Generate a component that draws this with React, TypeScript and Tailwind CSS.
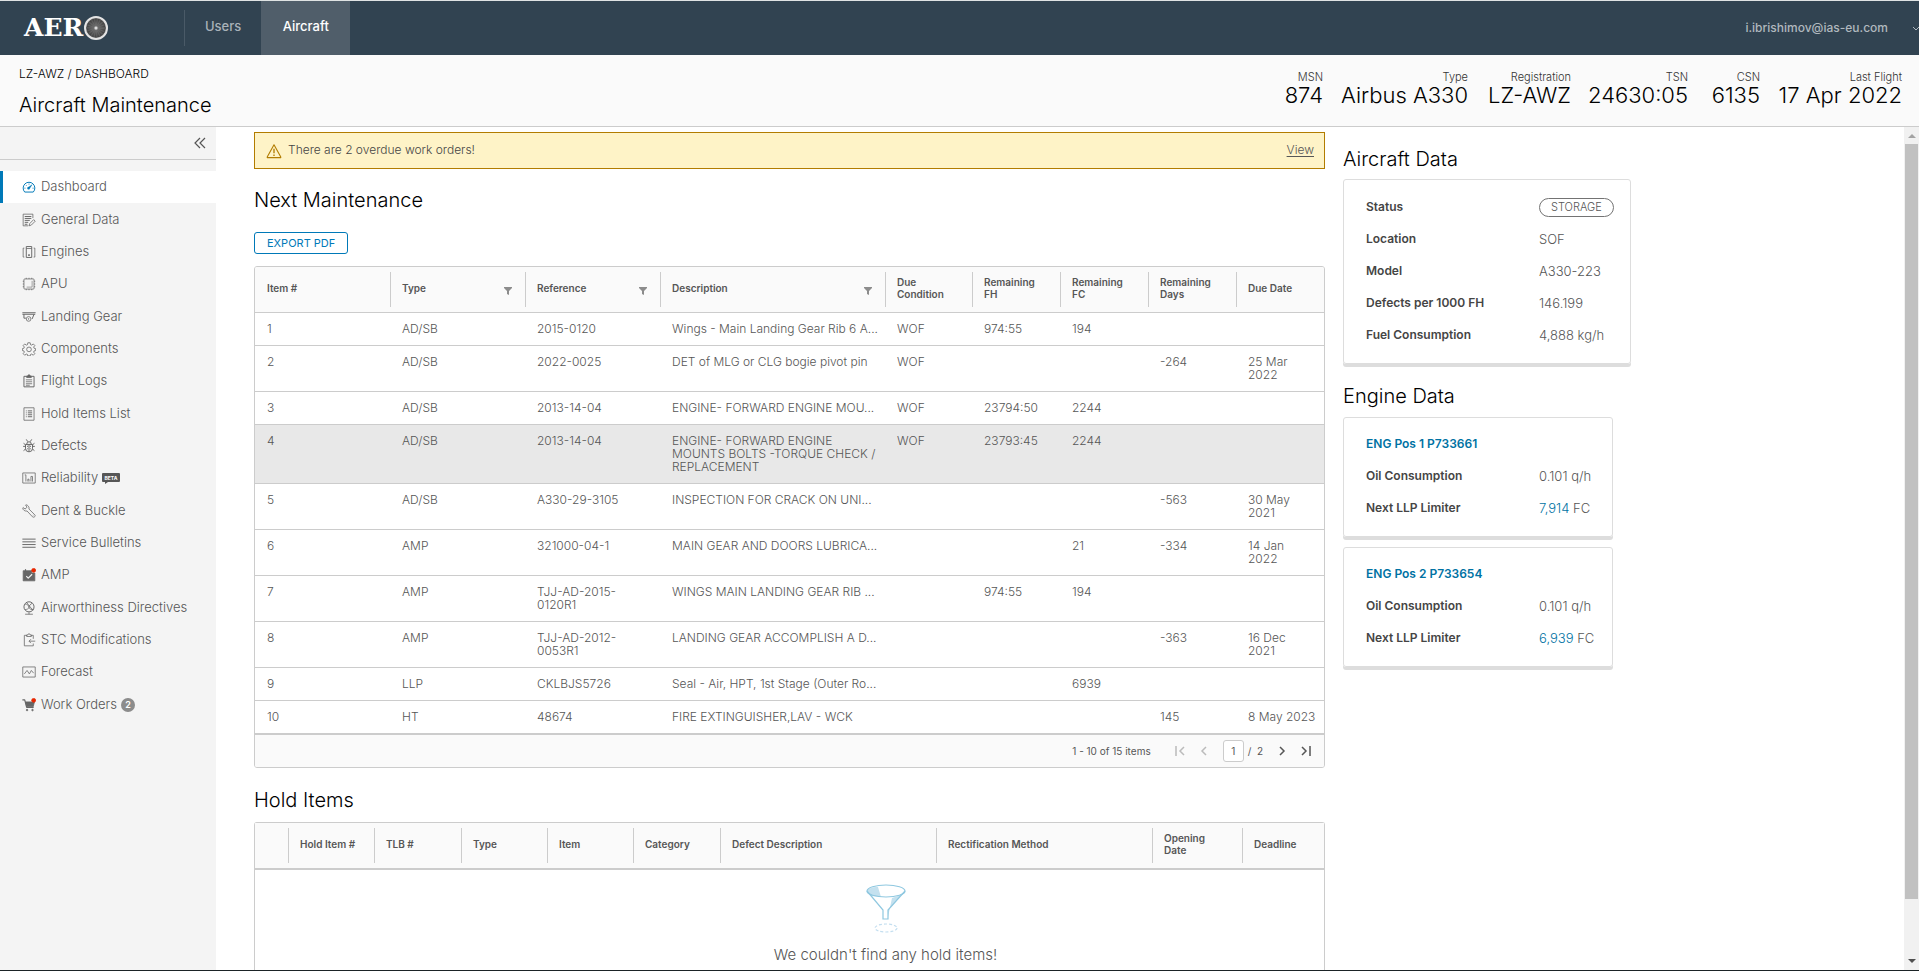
import type { ReactNode } from "react";

type NavItem = { label: string; icon: ReactNode; active?: boolean; beta?: boolean; count?: number };

function Icon({ children, className = "size-[14px]" }: { children: ReactNode; className?: string }) {
	return (
		<svg
			viewBox="0 0 36 36"
			className={`shrink-0 ${className}`}
			fill="none"
			stroke="currentColor"
			strokeWidth="2"
			strokeLinejoin="round"
			aria-hidden="true"
		>
			{children}
		</svg>
	);
}

const navItems: NavItem[] = [
	{
		label: "Dashboard",
		active: true,
		icon: (
			<>
				<path d="M7 31a15 15 0 1 1 22 0z" strokeWidth="2.5" />
				<path d="M6 21h3M27 21h3M18 9v3M10 13l2 2" />
				<path d="M26 12l-6 9a3 3 0 1 1-3-3z" fill="currentColor" strokeWidth="1" />
			</>
		),
	},
	{
		label: "General Data",
		icon: (
			<>
				<path d="M28 13V3H3v30h13" />
				<path d="M7 9h17M7 14h17M7 19h13M7 24h9M7 29h7" strokeWidth="2.5" />
				<path d="M20 27l10-10 4 4-10 10-6 2z" />
			</>
		),
	},
	{
		label: "Engines",
		icon: (
			<>
				<path d="M11 4h14v28H11z" strokeWidth="2.5" />
				<path d="M11 9h14M6 8H3v23h3M30 8h3v23h-3" />
				<path d="M16 26h4" strokeWidth="4" />
			</>
		),
	},
	{
		label: "APU",
		icon: (
			<>
				<rect x="5" y="5" width="26" height="26" rx="2" />
				<path d="M26 10v16H12" strokeWidth="1.5" />
				<path d="M11 2v3M18 2v3M25 2v3M11 31v3M18 31v3M25 31v3M2 11h3M2 18h3M2 25h3M31 11h3M31 18h3M31 25h3" />
			</>
		),
	},
	{
		label: "Landing Gear",
		icon: (
			<>
				<path d="M1 7h34M1 11h33M5 11v10h5M31 11l-5 12" strokeWidth="2.5" />
				<circle cx="17" cy="23" r="6" />
				<circle cx="17" cy="23" r="1" />
			</>
		),
	},
	{
		label: "Components",
		icon: (
			<>
				<path d="M15 2h6l1 5 3 1 4-3 4 4-3 4 1 3 4 1v5l-4 1-1 3 3 4-4 4-4-3-3 1-1 4h-6l-1-4-3-1-4 3-4-4 3-4-1-3-4-1v-5l4-1 1-3-3-4 4-4 4 3 3-1z" />
				<circle cx="18" cy="19" r="6" />
			</>
		),
	},
	{
		label: "Flight Logs",
		icon: (
			<>
				<path d="M12 6H5v27h26V6h-7" strokeWidth="2.5" />
				<path d="M12 9V5h3a3 3 0 0 1 6 0h3v4z" fill="currentColor" />
				<path d="M10 15h16M10 20h16M10 25h16M10 29h10" />
			</>
		),
	},
	{
		label: "Hold Items List",
		icon: (
			<>
				<rect x="5" y="2" width="26" height="32" />
				<path d="M10 10h2M10 15h2M10 20h2M10 25h2M15 10h11M15 15h11M15 20h11M15 25h11" strokeWidth="2.5" />
			</>
		),
	},
	{
		label: "Defects",
		icon: (
			<>
				<path d="M9 14h18v10a9 9 0 0 1-18 0z" strokeWidth="2.5" />
				<path d="M12 14a6 7 0 0 1 12 0M18 14v18M11 1l4 6M25 1l-4 6M9 19H3M27 19h6M10 25l-6 5M26 25l6 5M9 15l-5-4M27 15l5-4" strokeWidth="2.5" />
				<path d="M13 19h2M21 19h2M13 25h2M21 25h2" strokeWidth="3" />
			</>
		),
	},
	{
		label: "Reliability",
		beta: true,
		icon: (
			<>
				<rect x="2" y="5" width="32" height="26" />
				<path d="M7 10h3v17M15 27v-6h3v6M23 27V14h4v13" />
			</>
		),
	},
	{
		label: "Dent & Buckle",
		icon: (
			<>
				<path d="M33 28L18 13c1-5-2-10-8-11L9 3l4 5-5 5-5-4-1 1c0 6 6 9 11 8l14 15c4 3 9-2 6-5z" />
				<path d="M28 29h1" strokeWidth="2.5" />
			</>
		),
	},
	{ label: "Service Bulletins", icon: <path d="M1 8h34M1 15h34M1 22h34M1 29h34" strokeWidth="2.5" /> },
	{
		label: "AMP",
		icon: (
			<>
				<path d="M3 7h22v6h8v20H3z" fill="currentColor" />
				<path d="M9 3v7" strokeWidth="3" />
				<path d="M11 21l5 5 10-10" stroke="#f4f4f4" strokeWidth="3" />
				<circle cx="30" cy="6" r="5" fill="#e62700" stroke="#e62700" />
			</>
		),
	},
	{
		label: "Airworthiness Directives",
		icon: (
			<>
				<circle cx="18" cy="15" r="13" strokeWidth="2.5" />
				<path d="M8 8c6 0 9 3 10 8s6 7 12 5M26 6c-4 2-8 6-8 10s-6 6-10 6M12 4l16 20M8 34h20M18 29v5" />
			</>
		),
	},
	{
		label: "STC Modifications",
		icon: (
			<>
				<path d="M29 15V6h-6M13 6H6v27h23v-6" />
				<path d="M12 9V5h3a3 3 0 0 1 6 0h3v4zM34 21H18M23 16l-5 5 5 5" />
			</>
		),
	},
	{
		label: "Forecast",
		icon: (
			<>
				<rect x="2" y="5" width="32" height="26" />
				<path d="M6 23l7-9 6 9 5-9 6 7" />
			</>
		),
	},
	{
		label: "Work Orders",
		count: 2,
		icon: (
			<>
				<path d="M1 5h6l5 19h18" strokeWidth="3" />
				<path d="M9 10h23l-3 12H12z" fill="currentColor" />
				<circle cx="13" cy="31" r="2" fill="currentColor" />
				<circle cx="27" cy="31" r="2" fill="currentColor" />
				<circle cx="30" cy="6" r="5" fill="#e62700" stroke="#e62700" />
			</>
		),
	},
];

const stats = [
	{ label: "MSN", value: "874", width: "w-[60px]" },
	{ label: "Type", value: "Airbus A330", width: "w-[145px]" },
	{ label: "Registration", value: "LZ-AWZ", width: "w-[103px]" },
	{ label: "TSN", value: "24630:05", width: "w-[117px]" },
	{ label: "CSN", value: "6135", width: "w-[72px]" },
	{ label: "Last Flight", value: "17 Apr 2022", width: "w-[142px]" },
];

const maintenanceColumns = [
	{ label: "Item #", width: "w-[135px]" },
	{ label: "Type", width: "w-[135px]", filter: true },
	{ label: "Reference", width: "w-[135px]", filter: true },
	{ label: "Description", width: "w-[225px]", filter: true },
	{ label: "Due\nCondition", width: "w-[87px]" },
	{ label: "Remaining\nFH", width: "w-[88px]" },
	{ label: "Remaining\nFC", width: "w-[88px]" },
	{ label: "Remaining\nDays", width: "w-[88px]" },
	{ label: "Due Date", width: "w-[88px]" },
];

const maintenanceRows = [
	["1", "AD/SB", "2015-0120", "Wings - Main Landing Gear Rib 6 A...", "WOF", "974:55", "194", "", ""],
	["2", "AD/SB", "2022-0025", "DET of MLG or CLG bogie pivot pin", "WOF", "", "", "-264", "25 Mar\n2022"],
	["3", "AD/SB", "2013-14-04", "ENGINE- FORWARD ENGINE MOU...", "WOF", "23794:50", "2244", "", ""],
	["4", "AD/SB", "2013-14-04", "ENGINE- FORWARD ENGINE\nMOUNTS BOLTS -TORQUE CHECK /\nREPLACEMENT", "WOF", "23793:45", "2244", "", ""],
	["5", "AD/SB", "A330-29-3105", "INSPECTION FOR CRACK ON UNI...", "", "", "", "-563", "30 May\n2021"],
	["6", "AMP", "321000-04-1", "MAIN GEAR AND DOORS LUBRICA...", "", "", "21", "-334", "14 Jan\n2022"],
	["7", "AMP", "TJJ-AD-2015-\n0120R1", "WINGS MAIN LANDING GEAR RIB ...", "", "974:55", "194", "", ""],
	["8", "AMP", "TJJ-AD-2012-\n0053R1", "LANDING GEAR ACCOMPLISH A D...", "", "", "", "-363", "16 Dec\n2021"],
	["9", "LLP", "CKLBJS5726", "Seal - Air, HPT, 1st Stage (Outer Ro...", "", "", "6939", "", ""],
	["10", "HT", "48674", "FIRE EXTINGUISHER,LAV - WCK", "", "", "", "145", "8 May 2023"],
];

const holdColumns = [
	{ label: "", width: "w-[33px]" },
	{ label: "Hold Item #", width: "w-[86px]" },
	{ label: "TLB #", width: "w-[87px]" },
	{ label: "Type", width: "w-[86px]" },
	{ label: "Item", width: "w-[86px]" },
	{ label: "Category", width: "w-[87px]" },
	{ label: "Defect Description", width: "w-[216px]" },
	{ label: "Rectification Method", width: "w-[216px]" },
	{ label: "Opening\nDate", width: "w-[90px]" },
	{ label: "Deadline", width: "w-[82px]" },
];

const aircraftData = [
	{ label: "Location", value: "SOF" },
	{ label: "Model", value: "A330-223" },
	{ label: "Defects per 1000 FH", value: "146.199" },
	{ label: "Fuel Consumption", value: "4,888 kg/h" },
];

const engines = [
	{ name: "ENG Pos 1 P733661", oil: "0.101 q/h", limiter: "7,914" },
	{ name: "ENG Pos 2 P733654", oil: "0.101 q/h", limiter: "6,939" },
];

function Logo() {
	return (
		<a href="#" aria-label="AERO" className="flex w-[184px] items-center pl-6">
			<span className="font-['DejaVu_Serif',serif] text-[25px] leading-6 font-bold text-white">AER</span>
			<svg viewBox="0 0 26 26" className="size-[26px] shrink-0" aria-hidden="true">
				<defs>
					<radialGradient id="fan">
						<stop offset="0" stopColor="#aaa" />
						<stop offset="0.25" stopColor="#666" />
						<stop offset="0.8" stopColor="#444" />
						<stop offset="1" stopColor="#888" />
					</radialGradient>
				</defs>
				<circle cx="13" cy="13" r="11" fill="url(#fan)" stroke="#e4e4e4" strokeWidth="2" />
				<circle cx="13" cy="13" r="6" fill="none" stroke="#888" strokeWidth="6" strokeDasharray="1 1" opacity="0.3" />
				<circle cx="13" cy="13" r="1.5" fill="#ddd" />
			</svg>
		</a>
	);
}

function HeaderCell({ label, width, filter, first }: { label: string; width: string; filter?: boolean; first?: boolean }) {
	return (
		<th scope="col" className={`h-[45px] p-0 text-left align-middle font-semibold ${width}`}>
			<div className={`flex h-[35px] items-center pr-[13px] pb-[2px] ${first ? "pl-3" : "border-l border-[#ccc] pl-[11px]"}`}>
				<span className="flex-1 whitespace-pre">{label}</span>
				{filter && (
					<button type="button" aria-label={`Filter ${label}`} className="pt-[6px] text-[#8c8c8c]">
						<svg viewBox="0 0 8 8" className="size-2" fill="currentColor" aria-hidden="true">
							<path d="M0 0h8v1L5 4v4L3 7V4L0 1z" />
						</svg>
					</button>
				)}
			</div>
		</th>
	);
}

function PageButton({ label, path, disabled }: { label: string; path: string; disabled?: boolean }) {
	return (
		<button type="button" aria-label={label} disabled={disabled} className="text-[#565656] disabled:text-[#bbb]">
			<svg viewBox="0 0 10 10" className="size-[10px]" fill="none" stroke="currentColor" strokeWidth="1.5" aria-hidden="true">
				<path d={path} />
			</svg>
		</button>
	);
}

function DataRow({ label, children }: { label: string; children: ReactNode }) {
	return (
		<div className="flex h-8 items-center">
			<dt className="w-[173px] shrink-0 text-xs font-semibold text-[#454545]">{label}</dt>
			<dd className="whitespace-nowrap">{children}</dd>
		</div>
	);
}

export default function App() {
	return (
		<div className="flex h-screen flex-col overflow-hidden border-t border-b border-t-[#dfe3e3] border-b-[#1b2326] bg-white font-['Inter','Liberation_Sans',sans-serif] text-[13px] leading-4 font-light text-[#565656]">
			<header className="flex h-[54px] shrink-0 bg-[#314351]">
				<Logo />
				<nav className="flex flex-1 text-[13px] font-medium">
					<a href="#users" className="flex items-center text-[#a9b2b9]">
						<span className="flex h-9 items-center border-l border-[#4a5a67] px-5 pb-1">Users</span>
					</a>
					<a href="#aircraft" className="flex w-[89px] items-center justify-center bg-[#505e6a] pb-1 text-white">
						Aircraft
					</a>
				</nav>
				<button type="button" className="flex items-center gap-6 text-xs font-medium text-[#b0b8be]">
					i.ibrishimov@ias-eu.com
					<svg viewBox="0 0 7 7" className="size-[7px]" fill="none" stroke="currentColor" aria-hidden="true">
						<path d="M1 2l3 3 3-3" />
					</svg>
				</button>
			</header>

			<div className="flex h-[72px] shrink-0 justify-between border-b border-[#ccc] bg-[#fafafa] pr-[17px] pl-[19px] text-black">
				<div className="pt-[11px]">
					<p className="text-xs leading-4">LZ-AWZ / DASHBOARD</p>
					<h1 className="pt-[11px] text-[20px] leading-6">Aircraft Maintenance</h1>
				</div>
				<dl className="flex pt-[14px] text-right">
					{stats.map((s) => (
						<div key={s.label} className={s.width}>
							<dt className="text-[11px] leading-4 text-[#333]">{s.label}</dt>
							<dd className="text-[22px] leading-5 whitespace-nowrap">{s.value}</dd>
						</div>
					))}
				</dl>
			</div>

			<div className="flex min-h-0 flex-1">
				<aside className="w-[216px] shrink-0 bg-[#f4f4f4]">
					<div className="flex h-[33px] items-center justify-end border-b border-[#ccc] pr-[10px]">
						<button type="button" aria-label="Collapse menu">
							<svg viewBox="0 0 12 12" className="size-3" fill="none" stroke="currentColor" strokeWidth="1.2" aria-hidden="true">
								<path d="M6 1L1 6l5 5M11 1L6 6l5 5" />
							</svg>
						</button>
					</div>
					<nav className="mt-[11px] grid h-[550px] auto-rows-fr">
						{navItems.map((item) => (
							<a
								key={item.label}
								href="#"
								className={`flex items-center border-l-[3px] pl-[19px] ${item.active ? "border-[#0079b8] bg-white" : "border-transparent"}`}
							>
								<span className={item.active ? "text-[#0079b8]" : "text-[#666]"}>
									<Icon>{item.icon}</Icon>
								</span>
								<span className="pb-[2px] pl-[5px]">{item.label}</span>
								{item.beta && (
									<svg viewBox="0 0 18 11" className="ml-1 h-[11px] w-[18px]" aria-hidden="true">
										<path d="M1 0h16q1 0 1 1v7q0 1-1 1H6l-3 2V9H1q-1 0-1-1V1q0-1 1-1z" fill="#565656" />
										<text x="9" y="7" fill="#fff" fontSize="5" fontWeight="700" textAnchor="middle">BETA</text>
									</svg>
								)}
								{item.count && (
									<span className="ml-1 flex size-[14px] items-center justify-center rounded-full bg-[#8c8c8c] text-[9px] leading-3 font-semibold text-white">
										{item.count}
									</span>
								)}
							</a>
						))}
					</nav>
				</aside>

				<main className="grid min-w-0 flex-1 grid-cols-[1071fr_561fr] gap-x-[18px] overflow-hidden pl-[38px]">
					<section className="min-w-0 pt-[5px]">
						<div className="flex h-[37px] items-center border border-[#b27c00] bg-[#fef3c7] pr-[10px] pl-[11px] text-xs text-[#454545]">
							<Icon className="size-4 text-[#b27c00]">
								<path d="M18 4L3 31q-1 2 1 2h28q2 0 1-2z" strokeWidth="2.5" />
								<path d="M18 13v10M18 26v3" strokeWidth="3" />
							</Icon>
							<p className="flex-1 pb-[2px] pl-1.5">There are 2 overdue work orders!</p>
							<a href="#" className="pb-[2px] text-[#565656] underline underline-offset-2">View</a>
						</div>

						<h2 className="pt-[19px] text-[20px] leading-6 text-black">Next Maintenance</h2>
						<button
							type="button"
							className="mt-5 block h-[22px] rounded-[3px] border border-[#0079b8] px-3 text-[11px] leading-5 font-normal text-[#0079b8]"
						>
							EXPORT PDF
						</button>

						<div className="mt-3 overflow-hidden rounded-[3px] border border-[#ccc]">
							<table className="w-full table-fixed border-collapse">
								<thead className="border-b border-[#ccc] bg-[#fafafa] text-[10px] leading-3">
									<tr>
										{maintenanceColumns.map((c, i) => (
											<HeaderCell key={c.label} {...c} first={i === 0} />
										))}
									</tr>
								</thead>
								<tbody className="text-xs leading-[13px]">
									{maintenanceRows.map((row) => (
										<tr key={row[0]} className={`border-b border-[#ccc] ${row[0] === "4" ? "bg-[#e8e8e8]" : ""}`}>
											{row.map((cell, i) => (
												<td key={i} className="pt-[9px] pb-[10px] pl-3 align-top whitespace-pre">
													{cell}
												</td>
											))}
										</tr>
									))}
								</tbody>
							</table>
							<div className="flex h-[33px] items-center justify-end border-t border-[#ccc] bg-[#fafafa] pr-[13px] text-[10px] font-normal">
								<span className="pr-6">1 - 10 of 15 items</span>
								<div className="flex items-center gap-[14px]">
									<PageButton label="First page" path="M1 0v10M9 1L5 5l4 4" disabled />
									<PageButton label="Previous page" path="M7 1L3 5l4 4" disabled />
									<label className="flex items-center gap-1">
										<input
											aria-label="Page"
											defaultValue="1"
											className="h-[22px] w-[21px] rounded-[3px] border border-[#ccc] bg-white text-center"
										/>
										/&nbsp; 2
									</label>
									<PageButton label="Next page" path="M3 1l4 4-4 4" />
									<PageButton label="Last page" path="M1 1l4 4-4 4M9 0v10" />
								</div>
							</div>
						</div>

						<h2 className="pt-5 text-[20px] leading-6 text-black">Hold Items</h2>
						<div className="mt-[10px] rounded-t-[3px] border border-b-0 border-[#ccc]">
							<table className="w-full table-fixed border-collapse">
								<thead className="bg-[#fafafa] text-[10px] leading-3">
									<tr>
										{holdColumns.map((c, i) => (
											<HeaderCell key={c.label} {...c} first={i === 0} />
										))}
									</tr>
								</thead>
							</table>
							<div className="flex flex-col items-center border-t-2 border-[#ccc] pt-[14px] pb-10 pl-48">
								<svg viewBox="0 0 40 50" className="h-[50px] w-10" fill="none" stroke="#8fc8e0" strokeWidth="1.2" aria-hidden="true">
									<path d="M1 7l4 5 10 1-3-10C6 3 1 5 1 7zM38 8L22 26v7l4-19 9-3z" fill="#c4e1ef" stroke="none" />
									<ellipse cx="20" cy="7" rx="19" ry="6" />
									<path d="M1 7l16 19v9h5v-9L39 7" />
									<ellipse cx="20" cy="44" rx="11" ry="4" stroke="#c4dff0" strokeDasharray="3 2" />
								</svg>
								<p className="pt-[11px] text-[15px] leading-5">We couldn't find any hold items!</p>
							</div>
						</div>
					</section>

					<section className="pt-5">
						<h2 className="text-[20px] leading-6 text-black">Aircraft Data</h2>
						<dl className="mt-2 w-[288px] rounded-[3px] border border-[#ddd] px-[22px] pt-[11px] pb-3 shadow-[0_3px_0_#ddd]">
							<DataRow label="Status">
								<span className="flex h-[19px] items-center rounded-full border border-[#737373] px-[11px] pb-px text-[11px] leading-3">
									STORAGE
								</span>
							</DataRow>
							{aircraftData.map((d) => (
								<DataRow key={d.label} label={d.label}>{d.value}</DataRow>
							))}
						</dl>

						<h2 className="mt-5 text-[20px] leading-6 text-black">Engine Data</h2>
						<div className="flex flex-col gap-[10px] pt-[9px]">
							{engines.map((e) => (
								<div
									key={e.name}
									className="w-[270px] rounded-[3px] border border-[#ddd] px-[22px] pt-[10px] pb-3 shadow-[0_3px_0_#ddd]"
								>
									<a href="#" className="flex h-8 items-center text-xs font-semibold text-[#0072a3]">{e.name}</a>
									<dl>
										<DataRow label="Oil Consumption">{e.oil}</DataRow>
										<DataRow label="Next LLP Limiter">
											<a href="#" className="text-[#0072a3]">{e.limiter}</a> FC
										</DataRow>
									</dl>
								</div>
							))}
						</div>
					</section>
				</main>

				<div className="flex w-[15px] shrink-0 flex-col items-center bg-[#f1f1f1]" aria-hidden="true">
					<svg viewBox="0 0 15 17" className="h-[17px] w-[15px] shrink-0" fill="#a3a3a3">
						<path d="M4 11l4-4 4 4z" />
					</svg>
					<div className="h-[755px] w-[13px] bg-[#c1c1c1]" />
					<svg viewBox="0 0 15 17" className="mt-auto h-[17px] w-[15px] shrink-0" fill="#505050">
						<path d="M4 6l4 4 4-4z" />
					</svg>
				</div>
			</div>
		</div>
	);
}
